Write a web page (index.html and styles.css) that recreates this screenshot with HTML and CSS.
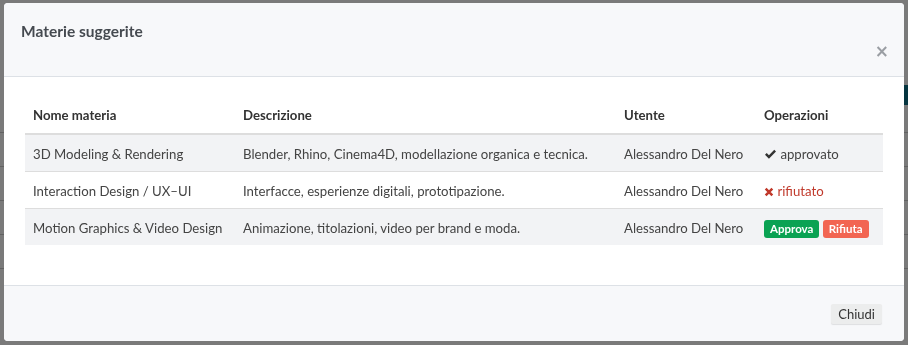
FILE: index.html
```html
<!DOCTYPE html>
<html lang="it">
<head>
    <meta charset="UTF-8">
    <title>Materie suggerite</title>
    <link rel="stylesheet" href="styles.css">
</head>
<body>
    <!-- Pagina dietro al modal -->
    <div class="page">
        <div class="page-toolbar">
            <span class="page-btn">Nuova</span>
        </div>
        <div class="page-line"></div>
        <div class="page-line"></div>
        <div class="page-line"></div>
        <div class="page-line"></div>
        <div class="page-line"></div>
    </div>

    <!-- Modal materie suggerite -->
    <div class="backdrop">
        <div class="modal">
            <div class="modal-header">
                <h4>Materie suggerite</h4>
                <button class="close">&times;</button>
            </div>

            <div class="modal-body">
                <table class="table">
                    <thead>
                        <tr>
                            <th class="col-nome">Nome materia</th>
                            <th class="col-desc">Descrizione</th>
                            <th class="col-utente">Utente</th>
                            <th>Operazioni</th>
                        </tr>
                    </thead>
                    <tbody>
                        <tr>
                            <td>3D Modeling &amp; Rendering</td>
                            <td>Blender, Rhino, Cinema4D, modellazione organica e tecnica.</td>
                            <td>Alessandro Del Nero</td>
                            <td><span class="status ok"><svg viewBox="0 0 14 12" width="13" height="11"><path d="M1 6.2 L2.9 4.3 L5.3 6.7 L11.1 0.9 L13 2.8 L5.3 10.5 Z" fill="#333"/></svg> approvato</span></td>
                        </tr>
                        <tr>
                            <td>Interaction Design / UX–UI</td>
                            <td>Interfacce, esperienze digitali, prototipazione.</td>
                            <td>Alessandro Del Nero</td>
                            <td><span class="status ko"><svg viewBox="0 0 12 12" width="10" height="10"><path d="M2 2 L10 10 M10 2 L2 10" stroke="#c0392b" stroke-width="3"/></svg> rifiutato</span></td>
                        </tr>
                        <tr>
                            <td>Motion Graphics &amp; Video Design</td>
                            <td>Animazione, titolazioni, video per brand e moda.</td>
                            <td>Alessandro Del Nero</td>
                            <td class="ops">
                                <button class="btn-xs btn-approva">Approva</button>
                                <button class="btn-xs btn-rifiuta">Rifiuta</button>
                            </td>
                        </tr>
                    </tbody>
                </table>
            </div>

            <div class="modal-footer">
                <button class="btn-chiudi">Chiudi</button>
            </div>
        </div>
    </div>
</body>
</html>
```

FILE: styles.css
```css
* {
    margin: 0;
    padding: 0;
    box-sizing: border-box;
}

body {
    font-family: 'Lato', 'Open Sans', sans-serif;
    font-size: 13.2px;
    color: #333;
    background: #fff;
}

/* Pagina dietro */
.page {
    height: 345px;
    padding-top: 85px;
}

.page-toolbar {
    display: flex;
    justify-content: flex-end;
    height: 47px;
}

.page-btn {
    background: #0b6f86;
    color: #fff;
    height: 20px;
    padding: 0 10px;
}

.page-line {
    height: 34px;
    border-top: 1px solid #ccc;
}

/* Modal */
.backdrop {
    position: fixed;
    top: 0;
    left: 0;
    width: 100%;
    height: 100%;
    background: rgba(0, 0, 0, 0.52);
    padding: 3px 4px 4px 4px;
}

.modal {
    background: #fff;
    height: 338px;
    border-radius: 4px;
    display: flex;
    flex-direction: column;
    overflow: hidden;
}

.modal-header {
    background: #f7f8fa;
    border-bottom: 1px solid #dde1e6;
    height: 74px;
    padding: 18px 17px 0 17px;
}

.modal-header h4 {
    font-size: 15.5px;
    font-weight: bold;
    color: #454a50;
    line-height: 20px;
}

.close {
    display: block;
    margin-left: auto;
    margin-top: 0;
    margin-right: -2px;
    border: none;
    background: none;
    font-size: 17px;
    font-weight: bold;
    color: #9a9ea3;
    line-height: 20px;
    font-family: 'DejaVu Sans', sans-serif;
}

.modal-body {
    flex: 1;
    padding: 20px 21px;
}

.table {
    width: 100%;
    border-collapse: collapse;
}

.table th,
.table td {
    text-align: left;
    padding: 0 8px;
    line-height: 20px;
    white-space: nowrap;
}

.table th {
    height: 37px;
    font-weight: bold;
    color: #333;
    border-bottom: 2px solid #ddd;
}

.table td {
    height: 37px;
    padding-top: 2px;
    border-top: 1px solid #ddd;
    color: #444;
}

.table tbody tr:first-child td {
    border-top: none;
}

.table tbody tr:nth-child(odd) {
    background: #f2f3f5;
}

.col-nome { width: 210px; }
.col-desc { width: 381px; }
.col-utente { width: 140px; }

.status svg {
    vertical-align: -1px;
}

.status.ko {
    color: #c0392b;
}

.btn-xs {
    border: none;
    border-radius: 3px;
    color: #fff;
    font-family: inherit;
    font-size: 11.5px;
    font-weight: bold;
    padding: 1px 6px;
    line-height: 16px;
}

.btn-approva {
    background: #0aa253;
}

.btn-rifiuta {
    background: #f26552;
}

.modal-footer {
    background: #f7f8fa;
    border-top: 1px solid #dde1e6;
    height: 56px;
    display: flex;
    justify-content: flex-end;
    align-items: center;
    padding: 0 22px;
}

.btn-chiudi {
    border: none;
    background: #eceded;
    color: #333;
    font-family: inherit;
    font-size: 13px;
    padding: 0 7px;
    height: 20px;
    border-radius: 2px;
    box-shadow: 0 1px 1px rgba(0, 0, 0, 0.1);
}
```
